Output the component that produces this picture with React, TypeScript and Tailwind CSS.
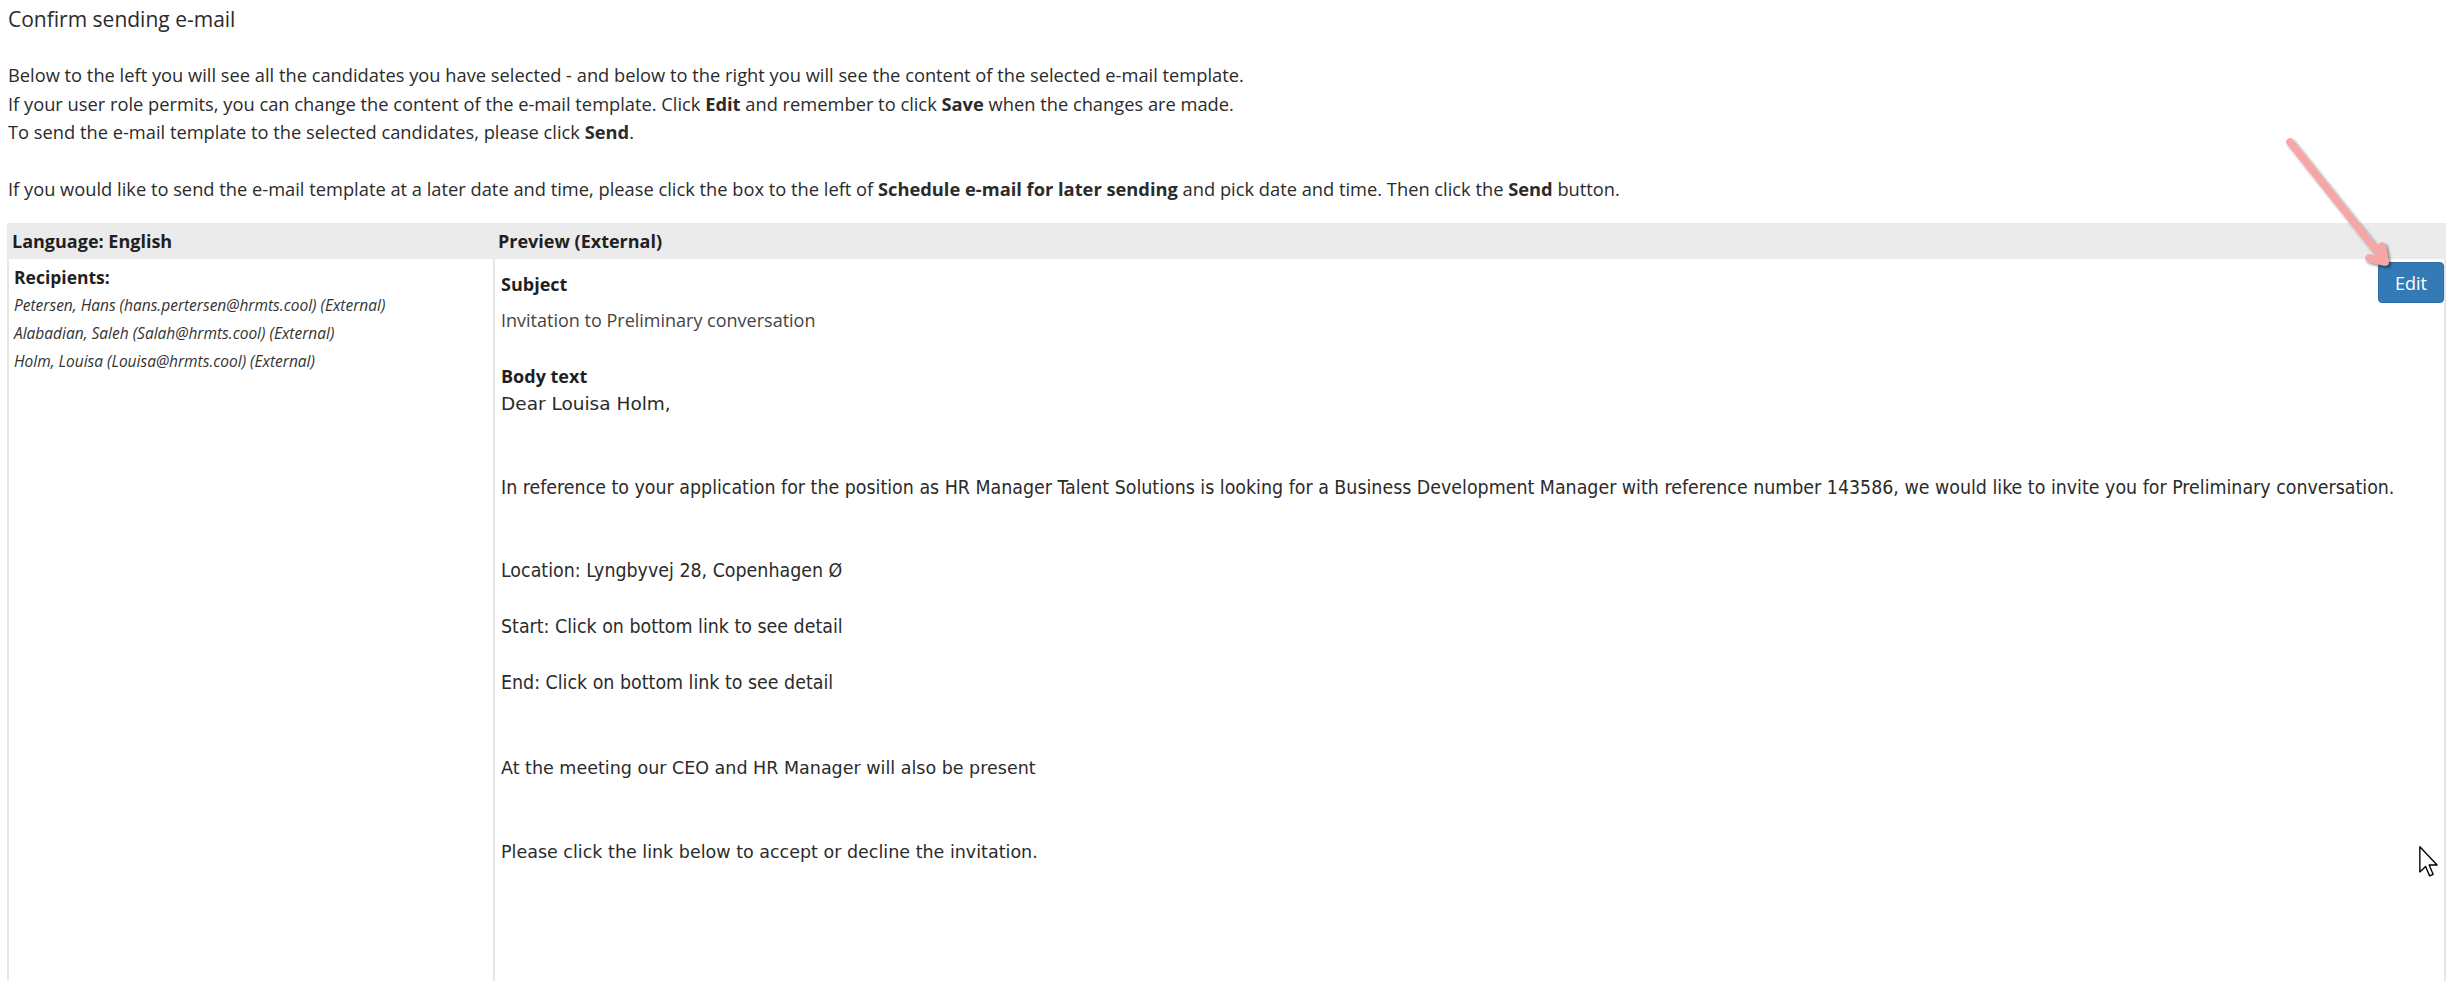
import React from 'react';

const recipients = [
    'Petersen, Hans (hans.pertersen@hrmts.cool) (External)',
    'Alabadian, Saleh (Salah@hrmts.cool) (External)',
    'Holm, Louisa (Louisa@hrmts.cool) (External)',
];

const sans = "font-['Open_Sans',sans-serif]";
const verdana = "font-['DejaVu_Sans',sans-serif] text-[17.5px]";
const tahoma = "font-['DejaVu_Sans_Condensed','DejaVu_Sans',sans-serif] [font-stretch:condensed] text-[19.4px]";

function PointerArrow() {
    return (
        <svg className="absolute left-[2270px] top-[125px]" width="176" height="150" viewBox="0 0 176 150">
            <defs>
                <filter id="shadow" x="-20%" y="-20%" width="140%" height="140%">
                    <feDropShadow dx="2" dy="2" stdDeviation="1.5" floodColor="#000" floodOpacity="0.5" />
                </filter>
            </defs>
            <g filter="url(#shadow)" stroke="#f6a6a6" strokeWidth="7.5" strokeLinecap="round" strokeLinejoin="round" fill="none">
                <line x1="20" y1="17" x2="114" y2="135" />
                <polyline points="112,121 115,137 99,133" />
            </g>
        </svg>
    );
}

function MouseCursor() {
    return (
        <svg className="absolute left-[2419px] top-[846px]" width="20" height="32" viewBox="0 0 13 21">
            <path
                d="M0.5 0.5 L0.5 17 L4.3 13.4 L6.9 19.6 L9.2 18.6 L6.6 12.5 L11.8 12.5 Z"
                fill="#fff"
                stroke="#000"
                strokeWidth="0.9"
                strokeLinejoin="round"
            />
        </svg>
    );
}

export default function App() {
    return (
        <div className={`relative min-h-[981px] bg-white text-[#2b2b2b] ${sans} overflow-hidden`}>
            {/* Intro */}
            <h1 className="pl-[8px] pt-[5px] text-[21px] leading-[28px] font-normal">Confirm sending e-mail</h1>

            <div className="pl-[8px] mt-[28px] text-[18.3px] leading-[28.5px]">
                <div>Below to the left you will see all the candidates you have selected - and below to the right you will see the content of the selected e-mail template.</div>
                <div>If your user role permits, you can change the content of the e-mail template. Click <b>Edit</b> and remember to click <b>Save</b> when the changes are made.</div>
                <div>To send the e-mail template to the selected candidates, please click <b>Send</b>.</div>
                <div className="mt-[28px]">
                    If you would like to send the e-mail template at a later date and time, please click the box to the left of{' '}
                    <b>Schedule e-mail for later sending</b> and pick date and time. Then click the <b>Send</b> button.
                </div>
            </div>

            {/* Table */}
            <div className="ml-[7px] mt-[20px]">
                <div className="flex h-[36px] items-center bg-[#ebebeb] text-[18px] font-bold text-[#1f1f1f]">
                    <div className="w-[488px] pl-[5px]">Language: English</div>
                    <div className="pl-[3px]">Preview (External)</div>
                </div>

                <div className="flex h-[722px] border-l-2 border-r-2 border-[#e6e6e6]">
                    <div className="w-[486px] shrink-0 border-r-2 border-[#e6e6e6] pl-[5px] pt-[4px] leading-[28px]">
                        <div className="text-[17.5px] font-bold text-[#1f1f1f]">Recipients:</div>
                        {recipients.map((r) => (
                            <div key={r} className="italic text-[15.5px] text-[#333]">{r}</div>
                        ))}
                    </div>

                    <div className="relative flex-1 pl-[6px] pt-[11px] leading-[28px] whitespace-nowrap">
                        <button className="absolute right-0 top-[3px] h-[41px] w-[66px] rounded-[4px] border border-[#2e6da4] bg-[#337ab7] text-[18px] text-white">
                            Edit
                        </button>

                        <div className="text-[18px] font-bold text-[#1f1f1f]">Subject</div>
                        <div className="mt-[8px] text-[18px] text-[#444]">Invitation to Preliminary conversation</div>

                        <div className="mt-[28px] text-[18px] font-bold text-[#1f1f1f]">Body text</div>
                        <div className="font-['DejaVu_Sans',sans-serif] text-[18.5px]">Dear Louisa Holm,</div>

                        <div className={`mt-[56px] ${tahoma}`}>
                            In reference to your application for the position as HR Manager Talent Solutions is looking for a Business Development Manager with reference number 143586, we would like to invite you for Preliminary conversation.
                        </div>
                        <div className={`mt-[55px] ${tahoma}`}>Location: Lyngbyvej 28, Copenhagen Ø</div>
                        <div className={`mt-[28px] ${tahoma}`}>Start: Click on bottom link to see detail</div>
                        <div className={`mt-[28px] ${tahoma}`}>End: Click on bottom link to see detail</div>
                        <div className={`mt-[57px] ${verdana}`}>At the meeting our CEO and HR Manager will also be present</div>
                        <div className={`mt-[56px] ${verdana}`}>Please click the link below to accept or decline the invitation.</div>
                    </div>
                </div>
            </div>

            <PointerArrow />
            <MouseCursor />
        </div>
    );
}
